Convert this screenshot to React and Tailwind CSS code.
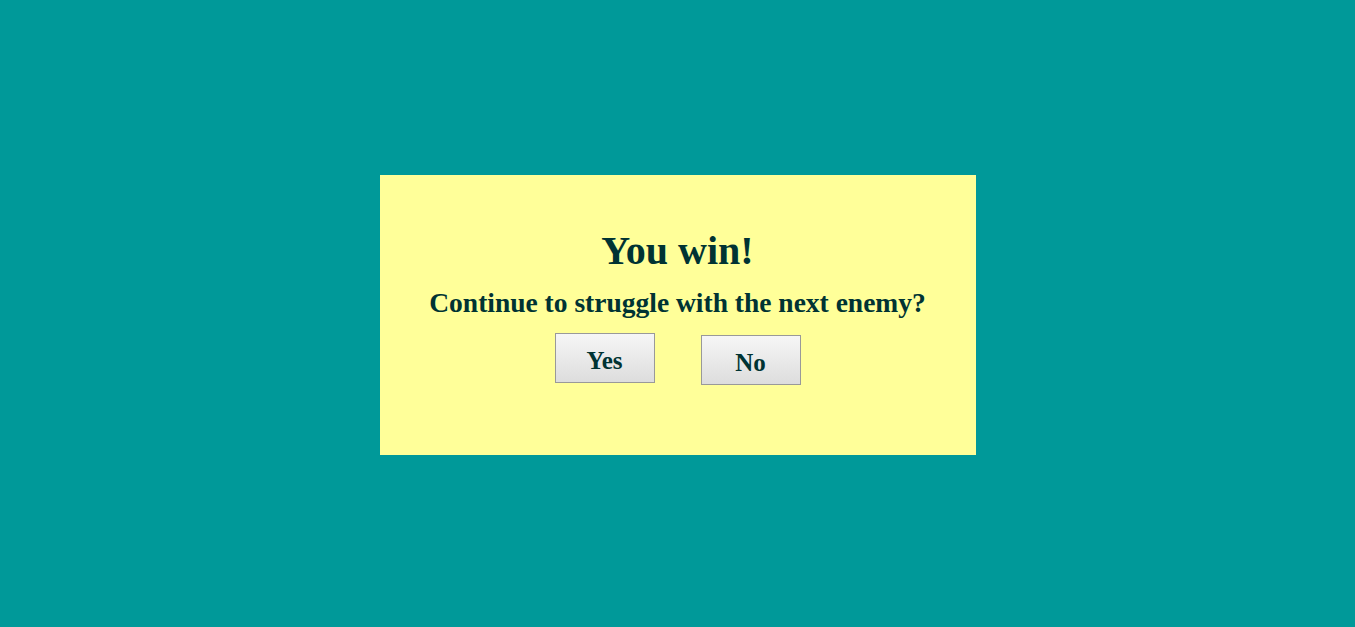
export default function App() {
  return (
    <div className="min-h-screen w-full bg-[#009999] flex items-center justify-center pt-[3px] font-['Liberation_Serif',serif] text-[#003333]">
      <div className="w-[596px] h-[280px] bg-[#ffff99] flex flex-col items-center pt-[52px]">
        <h1 className="text-[40px] font-bold leading-[48px]">You win!</h1>
        <p className="mt-[12px] text-[27.5px] font-bold leading-[32px]">Continue to struggle with the next enemy?</p>
        <div className="mt-[14px] flex items-start gap-[46px]">
          <button className="w-[100px] h-[50px] pt-[5px] border border-[#999999] bg-gradient-to-b from-[#f6f6f6] to-[#dddddd] text-[25px] font-bold text-[#003333]">
            Yes
          </button>
          <button className="w-[100px] h-[50px] pt-[5px] border border-[#999999] bg-gradient-to-b from-[#f6f6f6] to-[#dddddd] text-[25px] font-bold text-[#003333] mt-[2px]">
            No
          </button>
        </div>
      </div>
    </div>
  );
}
